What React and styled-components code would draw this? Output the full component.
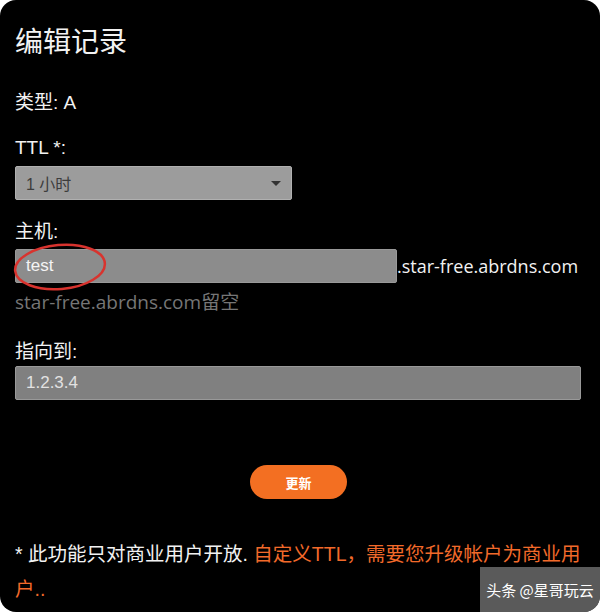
import styled, { createGlobalStyle } from 'styled-components';

const GlobalStyle = createGlobalStyle`
  html, body {
    margin: 0;
    padding: 0;
    background: #ffffff;
  }
  * {
    box-sizing: border-box;
  }
`;

const Card = styled.div`
  position: relative;
  width: 600px;
  height: 612px;
  background: #000;
  border-radius: 16px;
  overflow: hidden;
  padding: 24px 15px 0 15px;
  color: #f2f2f2;
  font-family: "Liberation Sans", "Noto Sans CJK SC", sans-serif;
  display: flex;
  flex-direction: column;
`;

const Title = styled.h1`
  margin: 0;
  font-size: 28px;
  line-height: 32px;
  font-weight: 400;
  font-family: "Noto Sans CJK SC", sans-serif;
`;

const Label = styled.div`
  margin-top: ${({ $mt }) => $mt}px;
  font-size: 19px;
  line-height: 24px;
`;

const SelectBox = styled.div`
  position: relative;
  margin-top: ${({ $mt }) => $mt}px;
  width: 277px;
  height: 34px;
  background: #9c9c9c;
  border: 1px solid #b0b0b0;
  border-radius: 2px;
  display: flex;
  align-items: center;
  padding-left: 10px;
  color: #3c3c3c;
  font-size: 16px;
`;

const Caret = styled.span`
  position: absolute;
  right: 10px;
  top: 14px;
  width: 0;
  height: 0;
  border-left: 5px solid transparent;
  border-right: 5px solid transparent;
  border-top: 5px solid #333;
`;

const HostRow = styled.div`
  position: relative;
  margin-top: ${({ $mt }) => $mt}px;
  display: flex;
  align-items: center;
`;

const Input = styled.div`
  width: ${({ $w }) => $w}px;
  height: 34px;
  background: ${({ $bg }) => $bg};
  border: 1px solid #999;
  border-radius: 2px;
  display: flex;
  align-items: center;
  padding-left: 10px;
  font-size: 17px;
  color: ${({ $fg }) => $fg};
  margin-top: ${({ $mt }) => $mt || 0}px;
`;

const Suffix = styled.span`
  font-family: "Open Sans", "Noto Sans CJK SC", sans-serif;
  font-size: 18px;
  color: #f2f2f2;
`;

const Ellipse = styled.svg`
  position: absolute;
  left: -4px;
  top: -10px;
  pointer-events: none;
`;

const Hint = styled.div`
  margin-top: ${({ $mt }) => $mt}px;
  font-family: "Open Sans", "Noto Sans CJK SC", sans-serif;
  font-size: 19px;
  line-height: 24px;
  color: #767676;
`;

const ButtonRow = styled.div`
  margin-top: ${({ $mt }) => $mt}px;
  display: flex;
  justify-content: center;
  padding-right: 3px;
`;

const Button = styled.button`
  width: 97px;
  height: 34px;
  border: none;
  border-radius: 17px;
  background: #f36f22;
  color: #fff;
  font-size: 13px;
  font-weight: 700;
  font-family: "Noto Sans CJK SC", sans-serif;
`;

const Note = styled.p`
  margin: ${({ $mt }) => $mt}px 0 0 0;
  font-size: 19.5px;
  line-height: 35px;
  color: #f2f2f2;
  font-family: "Liberation Sans", "Noto Sans CJK SC", sans-serif;
`;

const Warn = styled.span`
  color: #f26a2a;
`;

const Watermark = styled.div`
  position: absolute;
  right: 0;
  bottom: 0;
  width: 120px;
  height: 45px;
  background: rgba(120, 120, 120, 0.75);
  display: flex;
  align-items: center;
  justify-content: center;
  color: #fff;
  font-size: 15px;
  font-family: "Noto Sans CJK SC", sans-serif;
`;

export default function App() {
  return (
    <>
      <GlobalStyle />
      <Card>
        <Title>编辑记录</Title>
        <Label $mt={35}>类型: A</Label>
        <Label $mt={21}>TTL *:</Label>
        <SelectBox $mt={6}>
          1 小时
          <Caret />
        </SelectBox>
        <Label $mt={20}>主机:</Label>
        <HostRow $mt={5}>
          <Input $w={382} $bg="#8c8c8c" $fg="#f4f4f4">test</Input>
          <Suffix>.star-free.abrdns.com</Suffix>
          <Ellipse width="100" height="56" viewBox="0 0 100 56">
            <ellipse
              cx="49"
              cy="28"
              rx="45"
              ry="22"
              fill="none"
              stroke="#d8332e"
              strokeWidth="2.5"
              transform="rotate(-5 49 28)"
            />
          </Ellipse>
        </HostRow>
        <Hint $mt={7}>star-free.abrdns.com留空</Hint>
        <Label $mt={26}>指向到:</Label>
        <Input $w={566} $bg="#808080" $fg="#e2e2e2" $mt={2}>1.2.3.4</Input>
        <ButtonRow $mt={65}>
          <Button>更新</Button>
        </ButtonRow>
        <Note $mt={38}>
          * 此功能只对商业用户开放. <Warn>自定义TTL，需要您升级帐户为商业用户..</Warn>
        </Note>
        <Watermark>头条 @星哥玩云</Watermark>
      </Card>
    </>
  );
}
